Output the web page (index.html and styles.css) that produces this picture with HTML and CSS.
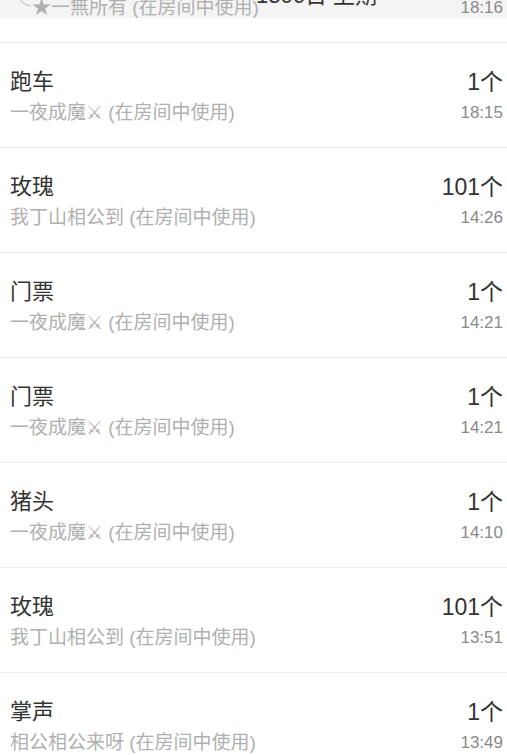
FILE: index.html
```html
<!DOCTYPE html>
<html lang="zh-CN">
<head>
    <meta charset="UTF-8">
    <meta name="viewport" content="width=device-width, initial-scale=1.0">
    <title>礼物记录</title>
    <link rel="stylesheet" href="styles.css">
</head>
<body>
    <div class="list">
        <div class="row row-first">
            <div class="left">
                <div class="title">鲜花</div>
                <div class="sub"><svg class="arc" width="22" height="14" viewBox="0 0 22 14"><path d="M8 0 Q9 10 21 12" fill="none" stroke="#bbb" stroke-width="1"/></svg>★一無所有 (在房间中使用)</div>
            </div>
            <div class="right">
                <div class="count">1个</div>
                <div class="time">18:16</div>
            </div>
            <div class="overlay">1306日 上期</div>
        </div>

        <div class="row">
            <div class="left">
                <div class="title">跑车</div>
                <div class="sub">一夜成魔⚔ (在房间中使用)</div>
            </div>
            <div class="right">
                <div class="count">1个</div>
                <div class="time">18:15</div>
            </div>
        </div>

        <div class="row">
            <div class="left">
                <div class="title">玫瑰</div>
                <div class="sub">我丁山相公到 (在房间中使用)</div>
            </div>
            <div class="right">
                <div class="count">101个</div>
                <div class="time">14:26</div>
            </div>
        </div>

        <div class="row">
            <div class="left">
                <div class="title">门票</div>
                <div class="sub">一夜成魔⚔ (在房间中使用)</div>
            </div>
            <div class="right">
                <div class="count">1个</div>
                <div class="time">14:21</div>
            </div>
        </div>

        <div class="row">
            <div class="left">
                <div class="title">门票</div>
                <div class="sub">一夜成魔⚔ (在房间中使用)</div>
            </div>
            <div class="right">
                <div class="count">1个</div>
                <div class="time">14:21</div>
            </div>
        </div>

        <div class="row">
            <div class="left">
                <div class="title">猪头</div>
                <div class="sub">一夜成魔⚔ (在房间中使用)</div>
            </div>
            <div class="right">
                <div class="count">1个</div>
                <div class="time">14:10</div>
            </div>
        </div>

        <div class="row">
            <div class="left">
                <div class="title">玫瑰</div>
                <div class="sub">我丁山相公到 (在房间中使用)</div>
            </div>
            <div class="right">
                <div class="count">101个</div>
                <div class="time">13:51</div>
            </div>
        </div>

        <div class="row">
            <div class="left">
                <div class="title">掌声</div>
                <div class="sub">相公相公来呀 (在房间中使用)</div>
            </div>
            <div class="right">
                <div class="count">1个</div>
                <div class="time">13:49</div>
            </div>
        </div>
    </div>
</body>
</html>
```

FILE: styles.css
```css
body {
    margin: 0;
    background: #fff;
    font-family: "Liberation Sans", "Noto Sans CJK SC", sans-serif;
    overflow: hidden;
}

.list {
    width: 507px;
}

.row {
    position: relative;
    display: flex;
    justify-content: space-between;
    height: 104px;
    padding: 0 4px 0 10px;
    border-bottom: 1px solid #ececec;
    box-sizing: content-box;
}

.row-first {
    margin-top: -62px;
    background: linear-gradient(#f4f4f4 80px, #fff 80px);
}

.left,
.right {
    padding-top: 25px;
}

.right {
    text-align: right;
}

.title {
    font-size: 22px;
    line-height: 28px;
    color: #333;
}

.sub {
    margin-top: 3px;
    font-size: 19px;
    line-height: 28px;
    color: #b0b0b0;
}

.count {
    font-size: 23px;
    line-height: 28px;
    color: #333;
}

.time {
    margin-top: 3px;
    font-size: 17px;
    line-height: 28px;
    color: #8a8a8a;
}

.arc {
    vertical-align: 6px;
}

.overlay {
    position: absolute;
    left: 256px;
    top: 44px;
    font-size: 22px;
    line-height: 28px;
    color: #333;
}
```
